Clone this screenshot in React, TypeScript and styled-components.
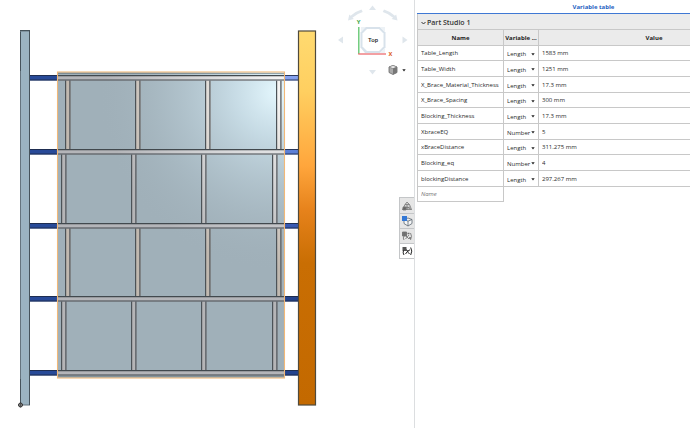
import React from "react";
import styled, { createGlobalStyle } from "styled-components";

const GlobalStyle = createGlobalStyle`
  * { box-sizing: border-box; }
  body {
    margin: 0;
    background: #fff;
    color: #2a2a2a;
    font-family: "Open Sans", "Noto Sans", sans-serif;
    font-size: 6px;
    line-height: 10px;
    overflow: hidden;
  }
`;

const Workspace = styled.main`
  display: grid;
  grid-template-columns: 3fr 2fr;
  min-height: 100vh;
`;

const Viewport = styled.section`
  position: relative;
`;

const ModelDrawing = styled.svg`
  display: block;
  width: 100%;
  height: auto;
`;

const ViewControls = styled.div`
  position: absolute;
  top: 0;
  right: 4px;
`;

const CubeDrawing = styled.svg`
  display: block;
`;

const FaceButton = styled.button`
  position: absolute;
  top: 31px;
  left: 28px;
  width: 20px;
  height: 18px;
  padding: 0;
  border: 0;
  background: transparent;
  color: #222;
  font: 500 6px/18px Roboto, sans-serif;
`;

const DisplayButton = styled.button`
  position: absolute;
  top: 64px;
  right: 4px;
  display: flex;
  align-items: center;
  gap: 4px;
  padding: 0;
  border: 0;
  background: transparent;
`;

const SideTabs = styled.nav`
  position: absolute;
  top: 197px;
  right: 0;
  display: flex;
  flex-direction: column;
  border: 1px solid #c4c6c8;
  border-right: 0;
`;

const SideTab = styled.button<{ $active?: boolean }>`
  display: grid;
  place-items: center;
  width: 14px;
  height: 15px;
  padding: 0;
  border: 0;
  background: ${(p) => (p.$active ? "#fff" : "#e6e6e6")};
  & + & { border-top: 1px solid #c4c6c8; }
`;

const Panel = styled.section`
  min-width: 0;
  padding-left: 2px;
  border-left: 1px solid #dcdee0;
  overflow: hidden;
`;

const PanelContent = styled.div`
  width: calc(100% + 80px);
`;

const PanelTitle = styled.h1`
  margin: 0;
  height: 14px;
  border-bottom: 1px solid #3f78d4;
  color: #2560bf;
  font-size: 6px;
  font-weight: 700;
  line-height: 14px;
  text-align: center;
`;

const StudioToggle = styled.button`
  display: flex;
  align-items: center;
  gap: 1px;
  width: 100%;
  height: 16px;
  padding: 2px 3px 0;
  border: 0;
  border-left: 1px solid #c8c8c8;
  border-bottom: 1px solid #c8c8c8;
  background: #ebebeb;
  color: #333;
  font: 600 7px/12px "Open Sans", sans-serif;
`;

const Table = styled.table`
  width: 100%;
  border-collapse: separate;
  border-spacing: 0;
  table-layout: fixed;
`;

const HeadCell = styled.th<{ $width?: string }>`
  width: ${(p) => p.$width ?? "auto"};
  height: 16px;
  padding: 0 1px;
  overflow: hidden;
  border-right: 1px solid #c8c8c8;
  border-bottom: 1px solid #c8c8c8;
  background: #ebebeb;
  color: #222;
  font-weight: 700;
  text-align: center;
  text-overflow: ellipsis;
  white-space: nowrap;
  &:first-child { border-left: 1px solid #c8c8c8; }
`;

const Row = styled.tr`
  height: 16px;
  &:nth-child(3n + 1) { height: 15px; }
`;

const Cell = styled.td<{ $empty?: boolean }>`
  padding: 0 3px;
  border-right: ${(p) => (p.$empty ? "0" : "1px solid #c8c8c8")};
  border-bottom: ${(p) => (p.$empty ? "0" : "1px solid #c8c8c8")};
  vertical-align: middle;
  &:first-child { border-left: 1px solid #c8c8c8; }
`;

const TextField = styled.input`
  display: block;
  width: 100%;
  height: 12px;
  padding: 0;
  border: 0;
  outline: 0;
  background: transparent;
  color: #2a2a2a;
  font: 6px/12px "Open Sans", sans-serif;
  &::placeholder { color: #777; font-style: italic; opacity: 1; }
`;

const TypePicker = styled.div`
  display: flex;
  align-items: center;
  height: 14px;
  padding-top: 2px;
`;

const TypeSelect = styled.select`
  flex: 1;
  min-width: 0;
  height: 12px;
  padding: 0;
  border: 0;
  outline: 0;
  appearance: none;
  background: transparent;
  color: #2a2a2a;
  font: 6px/12px "Open Sans", sans-serif;
`;

const Caret = () => (
  <svg width="4" height="3" viewBox="0 0 4 3" aria-hidden="true">
    <path d="M.3 .3h3.400L2 2.500Z" fill="#222" />
  </svg>
);

const braceYs = [75, 149, 223, 296, 370];
const blocking = [
  [65, 135, 205, 276],
  [61, 131, 201, 272],
  [65, 135, 205, 276],
  [61, 131, 201, 272],
];

function Model() {
  return (
    <ModelDrawing viewBox="0 0 414 428" role="img" aria-label="Table frame, top view">
      <defs>
        <radialGradient id="shine" gradientUnits="userSpaceOnUse" cx="278" cy="92" r="180">
          <stop offset="0" stopColor="#e6f9ff" stopOpacity=".98" />
          <stop offset=".25" stopColor="#d5ebf5" stopOpacity=".72" />
          <stop offset=".6" stopColor="#c0d4de" stopOpacity=".36" />
          <stop offset="1" stopColor="#a0b0b9" stopOpacity="0" />
        </radialGradient>
        <radialGradient id="beamShine" gradientUnits="userSpaceOnUse" cx="285" cy="90" r="180">
          <stop offset="0" stopColor="#fff" stopOpacity=".9" />
          <stop offset="1" stopColor="#fff" stopOpacity="0" />
        </radialGradient>
        <linearGradient id="wood" x1="0" y1="0" x2="0" y2="1">
          <stop offset="0" stopColor="#ffda70" />
          <stop offset=".16" stopColor="#ffcf60" />
          <stop offset=".36" stopColor="#ffa63c" />
          <stop offset=".48" stopColor="#e6821b" />
          <stop offset=".62" stopColor="#c96e03" />
          <stop offset="1" stopColor="#c36900" />
        </linearGradient>
        <linearGradient id="rod" gradientUnits="userSpaceOnUse" x1="0" y1="75" x2="0" y2="300">
          <stop offset="0" stopColor="#86a2f0" />
          <stop offset=".35" stopColor="#5b7ed5" />
          <stop offset=".7" stopColor="#3657b0" />
          <stop offset="1" stopColor="#24438d" />
        </linearGradient>
      </defs>

      <rect x="20.500" y="31" width="9" height="374" fill="#9bb3c1" stroke="#65747e" />
      <path d="M20.500 32v39M20.500 379v26M29.500 31v374M20 30.500h10" stroke="#46535b" fill="none" />

      {braceYs.map((y) => (
        <g key={y}>
          <rect x="30" y={y} width="28" height="5.500" fill="#284a98" />
          <rect x="285" y={y} width="13" height="5.500" fill="url(#rod)" />
          <path d={`M30 ${y + 0.5}h28M30 ${y + 5}h28M285 ${y + 0.5}h13M285 ${y + 5}h13`} stroke="#1c2844" strokeOpacity=".85" />
        </g>
      ))}

      <rect x="57.500" y="72" width="227" height="306" fill="#a0b0b9" />
      <rect x="57.500" y="72" width="227" height="306" fill="url(#shine)" />

      {blocking.map((xs, row) =>
        xs.map((x) => {
          const top = braceYs[row] + 5;
          const height = braceYs[row + 1] - top;
          return (
            <g key={`${row}-${x}`}>
              <rect x={x} y={top} width="5.500" height={height} fill={row % 2 ? "#b5b5b7" : "#c1b9b0"} />
              <rect x={x} y={top} width="5.500" height={height} fill="url(#beamShine)" />
              <path d={`M${x + 0.6} ${top}v${height}M${x + 4.9} ${top}v${height}`} stroke="#4c5358" strokeWidth="1.200" />
            </g>
          );
        })
      )}
      {braceYs.map((y) => (
        <g key={y}>
          <rect x="58" y={y} width="227" height="5.500" fill="#b4b5b9" />
          <rect x="58" y={y} width="227" height="5.500" fill="url(#beamShine)" />
          <path d={`M58 ${y + 0.6}h227M58 ${y + 5}h227`} stroke="#42494e" strokeWidth="1.200" />
        </g>
      ))}
      <path d="M58 73.500h227M58 376.300h227" stroke="#65737b" strokeWidth=".6" />
      <rect x="57.500" y="72" width="227" height="306" fill="none" stroke="#f1b878" strokeWidth="1.100" />

      <rect x="298.500" y="31" width="17" height="374" fill="url(#wood)" stroke="#4f4a3c" strokeWidth="1.200" />
      <circle cx="20.500" cy="405" r="2" fill="#aaa" stroke="#333" />
      <path d="M18 405h5M20.500 402.500v5" stroke="#333" strokeWidth=".6" />
    </ModelDrawing>
  );
}

function ViewCube() {
  return (
    <ViewControls>
      <CubeDrawing width="75" height="80" viewBox="335 0 75 80" aria-hidden="true">
        <g fill="#dfe6ec">
          <path d="M372.500 5.500l3.500 4.500h-7ZM372.500 74.500l3.500-4.500h-7ZM338 40l5-3.500v7ZM407.500 40l-5-3.500v7Z" />
          <path d="M348 20.500l1.300-6 1.300 1.200Q355 11.500 361.500 9.500l1.200 2.600Q356.500 14 352.400 17.800l1.500 1.200ZM397.500 20.500l-1.300-6-1.300 1.200Q390.500 11.500 384 9.500l-1.200 2.600Q389 14 393.100 17.800l-1.500 1.200Z" />
        </g>
        <path d="M365 27h15l5.500 5.500v15L380 53h-15l-4.500-5.500v-15Z" fill="#d8e2eb" />
        <path d="M367 29h12l4.500 4.500v13L379 51h-12l-4.500-4.500v-13Z" fill="#fff" />
        <path d="M361 27h5l-5 5ZM380 27h5v5ZM380 53h5v-5Z" fill="#edf2f6" />
        <path d="M358.800 27v27" stroke="#5cc56b" strokeWidth="1.300" />
        <path d="M358.200 54H386" stroke="#ed6b70" strokeWidth="1.300" />
        <text x="358.500" y="24" fill="#3da548" fontFamily="Roboto" fontSize="6" fontWeight="700" textAnchor="middle">Y</text>
        <text x="390.500" y="56" fill="#dd5a22" fontFamily="Roboto" fontSize="6" fontWeight="700" textAnchor="middle">X</text>
      </CubeDrawing>
      <FaceButton>Top</FaceButton>
      <DisplayButton aria-label="Display style">
        <svg width="10" height="12" viewBox="0 0 10 12" aria-hidden="true">
          <path d="M1 3l4-1.500L9 3v5.500L5 10.500 1 8.500Z" fill="#aaa" stroke="#666" strokeWidth=".8" />
          <path d="M1 3l4 1.600L9 3 5 1.500Z" fill="#eee" stroke="#777" strokeWidth=".6" />
          <path d="M5 4.600v5.900L9 8.500V3Z" fill="#777" />
        </svg>
        <Caret />
      </DisplayButton>
    </ViewControls>
  );
}

function PanelTabs() {
  return (
    <SideTabs aria-label="Panels">
      <SideTab aria-label="Appearance">
        <svg width="12" height="12" viewBox="0 0 12 12" fill="none" stroke="#777" strokeWidth=".8">
          <path d="M4 4.500 6 2l2.500 2.500L10.500 9.500h-9Z" fill="#d3d3d3" />
          <path d="M4 4.500h4.500M3 7l3 1 3-1M6 5v5M1.500 9.500 6 7l4.500 2.500" />
          <path d="M2 7h3v3H2Z" fill="#666" />
        </svg>
      </SideTab>
      <SideTab aria-label="Configurations">
        <svg width="12" height="12" viewBox="0 0 12 12" fill="none">
          <path d="M3 4.500 7 3l4 1.500v4L7 11 3 8.500ZM3 4.500l4 1.700 4-1.700M7 6.200V11" fill="#f5f7f8" stroke="#5c6670" strokeWidth=".8" />
          <path d="M1 1h5v5H1Z" fill="#3478d5" />
        </svg>
      </SideTab>
      <SideTab aria-label="Custom tables">
        <svg width="12" height="12" viewBox="0 0 12 12" fill="none" stroke="#6c6c6c" strokeWidth=".8">
          <path d="M1.500 2h4v4h-4Z" fill="#777" />
          <path d="M1.500 4h4M3.500 2v4M3 6Q1.500 8 3 10M9.500 3Q11.500 6 9.500 10M5 6l3 3M8 5 4.500 9" />
          <path d="M6.500 3.500h2M8 8h2" strokeWidth="1.500" />
        </svg>
      </SideTab>
      <SideTab aria-label="Variable table" $active>
        <svg width="12" height="12" viewBox="0 0 12 12" fill="none" stroke="#222" strokeWidth="1">
          <path d="M1.500 2h4v4h-4Z" fill="#555" stroke="none" />
          <path d="M2.500 5.500Q1.500 8 3 10M9.700 2.500Q11.800 6 9.700 10M5 5q1-.5 1.500 1T8.500 9M9 4.800Q6.500 5.500 4.500 9" />
        </svg>
      </SideTab>
    </SideTabs>
  );
}

const variables = [
  ["Table_Length", "Length", "1583 mm"],
  ["Table_Width", "Length", "1251 mm"],
  ["X_Brace_Material_Thickness", "Length", "17.3 mm"],
  ["X_Brace_Spacing", "Length", "300 mm"],
  ["Blocking_Thickness", "Length", "17.3 mm"],
  ["XbraceEQ", "Number", "5"],
  ["xBraceDistance", "Length", "311.275 mm"],
  ["Blocking_eq", "Number", "4"],
  ["blockingDistance", "Length", "297.267 mm"],
];

function VariableTable() {
  return (
    <Panel>
      <PanelContent>
        <PanelTitle>Variable table</PanelTitle>
        <StudioToggle aria-expanded="true">
          <svg width="5" height="4" viewBox="0 0 5 4" fill="none" aria-hidden="true">
            <path d="M.5 1l2 2 2-2" stroke="#333" />
          </svg>
          Part Studio 1
        </StudioToggle>
        <Table>
          <thead>
            <tr>
              <HeadCell $width="87px">Name</HeadCell>
              <HeadCell $width="35px">Variable ...</HeadCell>
              <HeadCell>Value</HeadCell>
            </tr>
          </thead>
          <tbody>
            {variables.map(([name, type, value]) => (
              <Row key={name}>
                <Cell><TextField aria-label="Variable name" defaultValue={name} /></Cell>
                <Cell>
                  <TypePicker>
                    <TypeSelect aria-label={`${name} type`} defaultValue={type}>
                      <option>Length</option>
                      <option>Number</option>
                    </TypeSelect>
                    <Caret />
                  </TypePicker>
                </Cell>
                <Cell><TextField aria-label={`${name} value`} defaultValue={value} /></Cell>
              </Row>
            ))}
            <Row>
              <Cell><TextField aria-label="New variable name" placeholder="Name" /></Cell>
              <Cell $empty />
              <Cell $empty />
            </Row>
          </tbody>
        </Table>
      </PanelContent>
    </Panel>
  );
}

export default function App() {
  return (
    <>
      <GlobalStyle />
      <Workspace>
        <Viewport>
          <Model />
          <ViewCube />
          <PanelTabs />
        </Viewport>
        <VariableTable />
      </Workspace>
    </>
  );
}
